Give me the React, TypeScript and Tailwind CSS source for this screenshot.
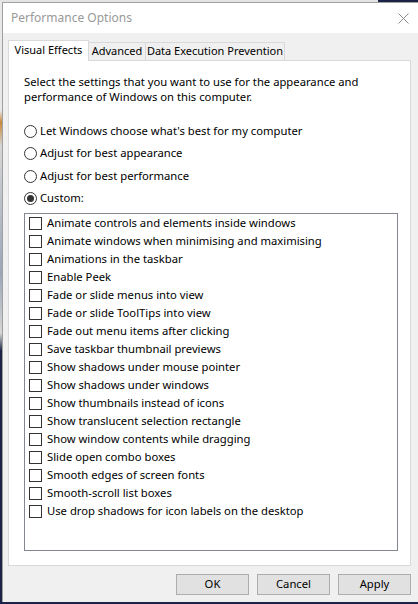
import React from 'react';

const FONT = { fontFamily: '"Noto Sans", "Open Sans", sans-serif' };

const effects = [
  'Animate controls and elements inside windows',
  'Animate windows when minimising and maximising',
  'Animations in the taskbar',
  'Enable Peek',
  'Fade or slide menus into view',
  'Fade or slide ToolTips into view',
  'Fade out menu items after clicking',
  'Save taskbar thumbnail previews',
  'Show shadows under mouse pointer',
  'Show shadows under windows',
  'Show thumbnails instead of icons',
  'Show translucent selection rectangle',
  'Show window contents while dragging',
  'Slide open combo boxes',
  'Smooth edges of screen fonts',
  'Smooth-scroll list boxes',
  'Use drop shadows for icon labels on the desktop',
];

const radios = [
  { label: "Let Windows choose what's best for my computer", checked: false },
  { label: 'Adjust for best appearance', checked: false },
  { label: 'Adjust for best performance', checked: false },
  { label: 'Custom:', checked: true },
];

const Radio: React.FC<{ checked: boolean }> = ({ checked }) => (
  <div className="w-[13px] h-[13px] rounded-full border border-[#333] bg-white flex items-center justify-center shrink-0">
    {checked && <div className="w-[7px] h-[7px] rounded-full bg-[#333]" />}
  </div>
);

const Tab: React.FC<{ label: string; active?: boolean; width: string }> = ({ label, active, width }) =>
  active ? (
    <div className={`${width} h-[21px] -mb-px relative z-10 bg-white border border-b-0 border-[#d9d9d9] flex items-center justify-center pb-[2px] whitespace-nowrap`}>
      {label}
    </div>
  ) : (
    <div className={`${width} h-[18px] bg-[#f0f0f0] border border-b-0 border-l-0 border-[#d9d9d9] flex items-center justify-center whitespace-nowrap`}>
      {label}
    </div>
  );

const Button: React.FC<{ label: string }> = ({ label }) => (
  <div className="w-[73px] h-[21px] bg-[#e1e1e1] border border-[#adadad] flex items-center justify-center text-black">
    {label}
  </div>
);

export default function App() {
  return (
    <div className="w-[418px] h-[604px] overflow-hidden flex flex-col bg-[#1b2346] text-[11.25px] text-black" style={FONT}>
      {/* desktop behind the dialog */}
      <div className="h-[2px] flex shrink-0">
        <div className="flex-1 bg-[#e4e4e4]" />
        <div className="w-[40px] bg-[#1b2346]" />
      </div>
      <div className="flex flex-1">
        <div className="w-[2px] bg-[linear-gradient(to_bottom,#e8e8e8_0%,#e8e8e8_18%,#c9883a_20%,#d6d6d6_24%,#9aa6b8_45%,#d6d6d6_55%,#1b2346_58%,#1b2346_100%)]" />
        <div className="flex-1 flex flex-col border-l border-t border-[#a0a0a0] bg-[#f0f0f0] mb-[2px]">
          {/* title bar */}
          <div className="h-[30px] bg-white flex items-center justify-between pl-[8px] pr-[9px] shrink-0">
            <span className="text-[12px] text-[#999999]">Performance Options</span>
            <svg width="11" height="11" viewBox="0 0 11 11">
              <path d="M0.5 0.5 L10.5 10.5 M10.5 0.5 L0.5 10.5" stroke="#8a8a8a" strokeWidth="1" />
            </svg>
          </div>

          {/* dialog body */}
          <div className="flex-1 flex flex-col pl-[5px] pr-[7px] pt-[7px]">
            <div className="flex items-end h-[20px] text-[11px]">
              <Tab label="Visual Effects" active width="w-[81px]" />
              <Tab label="Advanced" width="w-[57px]" />
              <Tab label="Data Execution Prevention" width="w-[139px]" />
            </div>

            <div className="h-[506px] bg-white border border-[#d9d9d9] pl-[15px] pr-[12px] pt-[13px] flex flex-col">
              <p className="leading-[15px] w-[372px]">
                Select the settings that you want to use for the appearance and performance of Windows on this computer.
              </p>

              <div className="mt-[16px] flex flex-col">
                {radios.map((r) => (
                  <div key={r.label} className="h-[22.5px] flex items-center gap-[3px]">
                    <Radio checked={r.checked} />
                    <span>{r.label}</span>
                  </div>
                ))}
              </div>

              <div className="mt-[3px] h-[338px] border border-[#828790] pl-[4px] flex flex-col">
                {effects.map((e) => (
                  <div key={e} className="h-[18px] flex items-center gap-[5px]">
                    <div className="w-[13px] h-[13px] border border-[#333] bg-white shrink-0" />
                    <span>{e}</span>
                  </div>
                ))}
              </div>
            </div>

            <div className="flex justify-end gap-[8px] mt-[8px]">
              <Button label="OK" />
              <Button label="Cancel" />
              <Button label="Apply" />
            </div>
          </div>
        </div>
      </div>
    </div>
  );
}
